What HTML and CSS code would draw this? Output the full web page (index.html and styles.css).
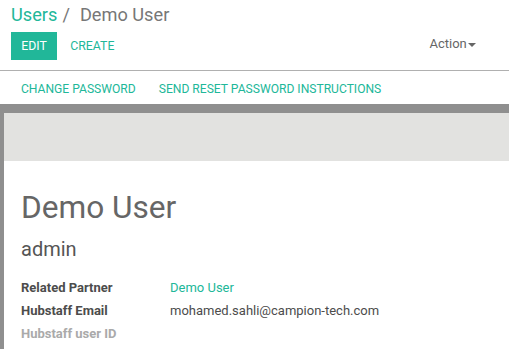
FILE: index.html
```html
<!DOCTYPE html>
<html lang="en">
<head>
    <meta charset="UTF-8">
    <title>Demo User</title>
    <link rel="stylesheet" href="styles.css">
</head>
<body>

<!-- Control Panel -->
<div class="control-panel">
    <ol class="breadcrumb">
        <li><a href="#">Users</a></li>
        <li class="active">Demo User</li>
    </ol>
    <div class="cp-buttons">
        <div class="cp-left">
            <button class="btn btn-primary">Edit</button>
            <button class="btn btn-link">Create</button>
        </div>
        <div class="cp-right">
            <button class="btn dropdown">Action <span class="caret"></span></button>
        </div>
    </div>
</div>

<!-- Header Buttons -->
<div class="form-header">
    <button class="btn btn-link">Change Password</button>
    <button class="btn btn-link">Send Reset Password Instructions</button>
</div>

<!-- Form Sheet -->
<div class="sheet-bg">
    <div class="sheet">
        <div class="sheet-band"></div>
        <div class="sheet-body">
            <h1 class="title">Demo User</h1>
            <h2 class="login">admin</h2>
            <table class="fields">
                <tr>
                    <td class="label">Related Partner</td>
                    <td><a href="#">Demo User</a></td>
                </tr>
                <tr>
                    <td class="label">Hubstaff Email</td>
                    <td>mohamed.sahli@campion-tech.com</td>
                </tr>
                <tr>
                    <td class="label muted">Hubstaff user ID</td>
                    <td></td>
                </tr>
            </table>
        </div>
    </div>
</div>

</body>
</html>
```

FILE: styles.css
```css
/* Basic Reset */
* {
    box-sizing: border-box;
    margin: 0;
    padding: 0;
}

body {
    font-family: Roboto, "Liberation Sans", sans-serif;
    font-size: 13px;
    color: #4c4c4c;
    background: #fff;
    overflow: hidden;
}

a {
    color: #21b799;
    text-decoration: none;
}

/* Control Panel */
.control-panel {
    padding: 3px 11px 10px 11px;
    border-bottom: 1px solid #b0b0b0;
}

.breadcrumb {
    list-style: none;
    display: flex;
    font-size: 18.2px;
    line-height: 24px;
}

.breadcrumb li.active {
    color: #777;
}

.breadcrumb li + li::before {
    content: "/";
    color: #777;
    padding: 0 10px 0 5px;
}

.cp-buttons {
    display: flex;
    justify-content: space-between;
    align-items: center;
    margin-top: 5px;
}

.btn {
    border: none;
    background: none;
    font-family: inherit;
    font-size: 12.3px;
    text-transform: uppercase;
    cursor: pointer;
    height: 28px;
    padding: 0 10px;
}

.btn-primary {
    background-color: #21b799;
    color: #fff;
    width: 46px;
    padding: 0;
}

.btn-link {
    color: #21b799;
}

.dropdown {
    text-transform: none;
    color: #666;
    font-size: 13px;
    margin-right: 12px;
    margin-top: -5px;
}

.caret {
    display: inline-block;
    width: 0;
    height: 0;
    border-top: 4px solid #666;
    border-left: 4px solid transparent;
    border-right: 4px solid transparent;
    vertical-align: middle;
    margin-left: -2px;
}

/* Header Buttons */
.form-header {
    display: flex;
    padding: 4px 11px 0 11px;
    height: 33px;
    gap: 3px;
}

.form-header .btn {
    font-size: 12.1px;
}

/* Sheet */
.sheet-bg {
    background-color: #8f8f8f;
    padding: 9px 0 0 4px;
}

.sheet-band {
    height: 48px;
    background-color: #e2e2e0;
}

.sheet-body {
    background: #fff;
    padding: 27px 17px 20px 17px;
    min-height: 200px;
}

.title {
    font-size: 31.6px;
    font-weight: 400;
    color: #666;
    line-height: 40px;
}

.login {
    font-size: 20px;
    font-weight: 400;
    color: #555;
    margin-top: 8px;
    line-height: 26px;
}

.fields {
    border-collapse: collapse;
    margin-top: 14px;
}

.fields td {
    padding: 0;
    height: 23px;
    vertical-align: middle;
}

.fields .label {
    font-weight: 700;
    width: 149px;
    color: #4c4c4c;
}

.fields .muted {
    color: #aaa;
}
```
